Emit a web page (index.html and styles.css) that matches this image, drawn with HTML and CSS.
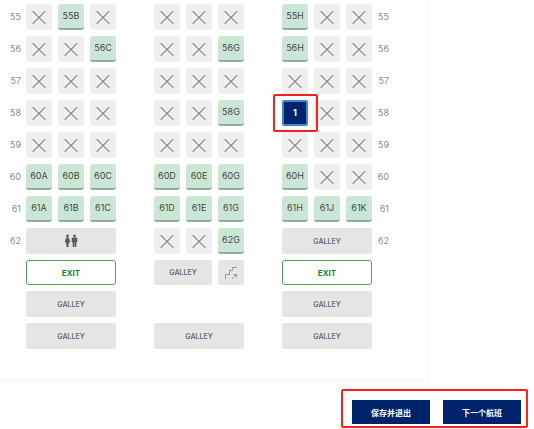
FILE: index.html
```
<!DOCTYPE html>
<html lang="zh-CN">
<head>
    <meta charset="UTF-8">
    <meta name="viewport" content="width=device-width, initial-scale=1.0">
    <title>Seat map</title>
    <link rel="stylesheet" href="styles.css">
</head>
<body>
    <main class="seat-panel">
        <div class="seat-row">
            <span class="row-number">55</span>
            <div class="seat-group">
                <button class="seat taken" aria-label="55A" disabled></button>
                <button class="seat">55B</button>
                <button class="seat taken" aria-label="55C" disabled></button>
            </div>
            <div class="seat-group">
                <button class="seat taken" aria-label="55D" disabled></button>
                <button class="seat taken" aria-label="55E" disabled></button>
                <button class="seat taken" aria-label="55G" disabled></button>
            </div>
            <div class="seat-group">
                <button class="seat">55H</button>
                <button class="seat taken" aria-label="55J" disabled></button>
                <button class="seat taken" aria-label="55K" disabled></button>
            </div>
            <span class="row-number end">55</span>
        </div>

        <div class="seat-row">
            <span class="row-number">56</span>
            <div class="seat-group">
                <button class="seat taken" aria-label="56A" disabled></button>
                <button class="seat taken" aria-label="56B" disabled></button>
                <button class="seat">56C</button>
            </div>
            <div class="seat-group">
                <button class="seat taken" aria-label="56D" disabled></button>
                <button class="seat taken" aria-label="56E" disabled></button>
                <button class="seat">56G</button>
            </div>
            <div class="seat-group">
                <button class="seat">56H</button>
                <button class="seat taken" aria-label="56J" disabled></button>
                <button class="seat taken" aria-label="56K" disabled></button>
            </div>
            <span class="row-number end">56</span>
        </div>

        <div class="seat-row">
            <span class="row-number">57</span>
            <div class="seat-group">
                <button class="seat taken" aria-label="57A" disabled></button>
                <button class="seat taken" aria-label="57B" disabled></button>
                <button class="seat taken" aria-label="57C" disabled></button>
            </div>
            <div class="seat-group">
                <button class="seat taken" aria-label="57D" disabled></button>
                <button class="seat taken" aria-label="57E" disabled></button>
                <button class="seat taken" aria-label="57G" disabled></button>
            </div>
            <div class="seat-group">
                <button class="seat taken" aria-label="57H" disabled></button>
                <button class="seat taken" aria-label="57J" disabled></button>
                <button class="seat taken" aria-label="57K" disabled></button>
            </div>
            <span class="row-number end">57</span>
        </div>

        <div class="seat-row">
            <span class="row-number">58</span>
            <div class="seat-group">
                <button class="seat taken" aria-label="58A" disabled></button>
                <button class="seat taken" aria-label="58B" disabled></button>
                <button class="seat taken" aria-label="58C" disabled></button>
            </div>
            <div class="seat-group">
                <button class="seat taken" aria-label="58D" disabled></button>
                <button class="seat taken" aria-label="58E" disabled></button>
                <button class="seat">58G</button>
            </div>
            <div class="seat-group">
                <div class="seat-marked">
                    <button class="seat selected">1</button>
                </div>
                <button class="seat taken" aria-label="58J" disabled></button>
                <button class="seat taken" aria-label="58K" disabled></button>
            </div>
            <span class="row-number end">58</span>
        </div>

        <div class="seat-row">
            <span class="row-number">59</span>
            <div class="seat-group">
                <button class="seat taken" aria-label="59A" disabled></button>
                <button class="seat taken" aria-label="59B" disabled></button>
                <button class="seat taken" aria-label="59C" disabled></button>
            </div>
            <div class="seat-group">
                <button class="seat taken" aria-label="59D" disabled></button>
                <button class="seat taken" aria-label="59E" disabled></button>
                <button class="seat taken" aria-label="59G" disabled></button>
            </div>
            <div class="seat-group">
                <button class="seat taken" aria-label="59H" disabled></button>
                <button class="seat taken" aria-label="59J" disabled></button>
                <button class="seat taken" aria-label="59K" disabled></button>
            </div>
            <span class="row-number end">59</span>
        </div>

        <div class="seat-row">
            <span class="row-number">60</span>
            <div class="seat-group">
                <button class="seat">60A</button>
                <button class="seat">60B</button>
                <button class="seat">60C</button>
            </div>
            <div class="seat-group">
                <button class="seat">60D</button>
                <button class="seat">60E</button>
                <button class="seat">60G</button>
            </div>
            <div class="seat-group">
                <button class="seat">60H</button>
                <button class="seat taken" aria-label="60J" disabled></button>
                <button class="seat taken" aria-label="60K" disabled></button>
            </div>
            <span class="row-number end">60</span>
        </div>

        <div class="seat-row">
            <span class="row-number">61</span>
            <div class="seat-group">
                <button class="seat">61A</button>
                <button class="seat">61B</button>
                <button class="seat">61C</button>
            </div>
            <div class="seat-group">
                <button class="seat">61D</button>
                <button class="seat">61E</button>
                <button class="seat">61G</button>
            </div>
            <div class="seat-group">
                <button class="seat">61H</button>
                <button class="seat">61J</button>
                <button class="seat">61K</button>
            </div>
            <span class="row-number end">61</span>
        </div>

        <div class="seat-row">
            <span class="row-number">62</span>
            <div class="seat-group">
                <div class="facility wide">
                    <svg width="14" height="14" viewBox="0 0 14 14" fill="#5c5c5c" role="img" aria-label="Lavatory">
                        <circle cx="3.5" cy="1.9" r="1.4"/>
                        <path d="M2.2 3.5h2.6L6.2 8l-1 .5-.2-.4.2 1.4h-.6V13H2.4V9.5h-.6L2 8.1l-.2.4-1-.5z"/>
                        <circle cx="10.5" cy="1.9" r="1.4"/>
                        <path d="M8.3 3.5h4.4q.6 0 .6.6v4.1h-1V13h-1.6V9h-.4v4H8.7V8.2h-1V4.1q0-.6.6-.6z"/>
                    </svg>
                </div>
            </div>
            <div class="seat-group">
                <button class="seat taken" aria-label="62D" disabled></button>
                <button class="seat taken" aria-label="62E" disabled></button>
                <button class="seat">62G</button>
            </div>
            <div class="seat-group">
                <div class="facility wide">GALLEY</div>
            </div>
            <span class="row-number end">62</span>
        </div>

        <div class="seat-row exit-row">
            <span class="row-number"></span>
            <div class="seat-group">
                <div class="exit wide">EXIT</div>
            </div>
            <div class="seat-group">
                <div class="facility double">GALLEY</div>
                <div class="facility">
                    <svg width="14" height="14" viewBox="0 0 14 14" fill="none" stroke="#999" role="img" aria-label="Stairs">
                        <path d="M1.5 13V8.5h4v-4h3v-3H13"/>
                        <path d="M8 13l4.5-4.5M9.5 8.5h3v3"/>
                    </svg>
                </div>
            </div>
            <div class="seat-group">
                <div class="exit wide">EXIT</div>
            </div>
        </div>

        <div class="seat-row">
            <span class="row-number"></span>
            <div class="seat-group">
                <div class="facility wide">GALLEY</div>
            </div>
            <div class="seat-group"></div>
            <div class="seat-group">
                <div class="facility wide">GALLEY</div>
            </div>
        </div>

        <div class="seat-row">
            <span class="row-number"></span>
            <div class="seat-group">
                <div class="facility wide">GALLEY</div>
            </div>
            <div class="seat-group">
                <div class="facility wide">GALLEY</div>
            </div>
            <div class="seat-group">
                <div class="facility wide">GALLEY</div>
            </div>
        </div>
    </main>

    <footer class="footer">
        <div class="actions">
            <button class="btn">保存并退出</button>
            <button class="btn">下一个航班</button>
        </div>
    </footer>
</body>
</html>
```
FILE: styles.css
```
* {
    box-sizing: border-box;
}
body {
    margin: 0;
    background-color: #fff;
    font-family: Inter, "Noto Sans CJK SC", sans-serif;
}
button {
    padding: 0;
    font-family: inherit;
    cursor: pointer;
}
.seat-panel {
    display: flex;
    flex-direction: column;
    gap: 6px;
    width: 80%;
    min-width: 430px;
    padding: 4px 0 30px;
    border-right: 3px solid #fafafa;
    border-bottom: 4px solid #fafafa;
}
.seat-row {
    display: flex;
    height: 26px;
}
.exit-row {
    height: 25px;
}
.row-number {
    width: 21px;
    color: #8c8c8c;
    font-size: 9px;
    line-height: 25px;
    text-align: right;
}
.row-number.end {
    width: 17px;
}
.seat-group {
    display: grid;
    grid-template-columns: repeat(3, 26px);
    gap: 6px;
    margin-left: 38px;
}
.row-number + .seat-group {
    margin-left: 5px;
}
.seat {
    display: grid;
    place-items: center;
    width: 100%;
    height: 26px;
    border: none;
    border-bottom: 2px solid #8fad9c;
    border-radius: 3px;
    background-color: #cce6d6;
    color: #3c4a42;
    font-size: 9px;
    line-height: 24px;
}
.seat.taken {
    border-bottom: none;
    background-color: #eee;
    cursor: default;
}
/* two crossed strokes */
.seat.taken::before,
.seat.taken::after {
    content: "";
    grid-area: 1 / 1;
    width: 18px;
    height: 1px;
    background-color: #808080;
    transform: rotate(45deg);
}
.seat.taken::after {
    transform: rotate(-45deg);
}
.seat.selected {
    border: 2px solid #3d85dc;
    border-radius: 2px;
    background-color: #00246b;
    color: #fff;
    font-weight: bold;
    line-height: 22px;
}
.seat-marked {
    position: relative;
}
.seat-marked::after {
    content: "";
    position: absolute;
    inset: -6px -10px -6px -9px;
    border: 2px solid #fb2018;
    border-radius: 2px;
    pointer-events: none;
}
.facility,
.exit {
    display: flex;
    justify-content: center;
    align-items: center;
    border-radius: 3px;
    background-color: #e5e5e5;
    color: #6b6b6b;
    font-size: 7px;
    font-weight: 600;
}
.exit {
    border: 1px solid #4da358;
    background-color: #fff;
    color: #1b8030;
    font-size: 8px;
    font-weight: bold;
}
.wide {
    grid-column: span 3;
}
.double {
    grid-column: span 2;
}
.footer {
    display: flex;
    justify-content: flex-end;
    padding: 6px 6px 0;
}
.actions {
    display: flex;
    gap: 13px;
    padding: 9px 5px 2px 9px;
    border: 2px solid #fb2018;
    border-radius: 2px;
}
.btn {
    width: 78px;
    height: 24px;
    border: none;
    background-color: #00246b;
    color: #fff;
    font-size: 8px;
    font-weight: bold;
}
```
